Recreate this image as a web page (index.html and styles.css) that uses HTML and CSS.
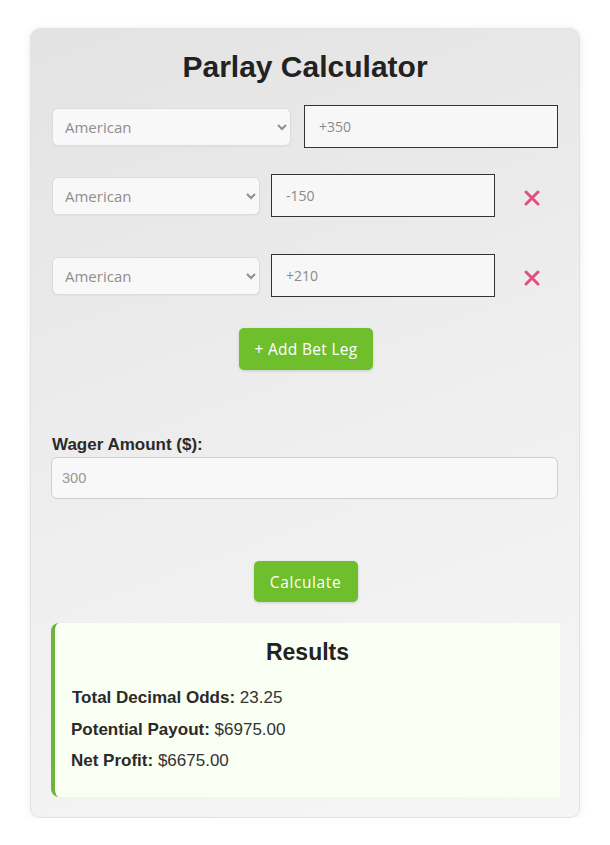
FILE: index.html
```html
<!DOCTYPE html>
<html lang="en">
<head>
<meta charset="utf-8">
<title>Parlay Calculator</title>
<link rel="stylesheet" href="styles.css">
</head>
<body>
<div class="page">
  <div class="card">
    <h1 class="title">Parlay Calculator</h1>

    <div class="leg leg-first">
      <select class="odds-type"><option>American</option></select>
      <input class="odds-input" type="text" placeholder="+350">
    </div>

    <div class="leg leg-second">
      <select class="odds-type"><option>American</option></select>
      <input class="odds-input" type="text" placeholder="-150">
      <button class="remove" type="button" aria-label="Remove">
        <svg width="18" height="18" viewBox="0 0 18 18"><path d="M3 3 L15 15 M15 3 L3 15" stroke="#e0527e" stroke-width="3" stroke-linecap="round" fill="none"/></svg>
      </button>
    </div>

    <div class="leg leg-third">
      <select class="odds-type"><option>American</option></select>
      <input class="odds-input" type="text" placeholder="+210">
      <button class="remove" type="button" aria-label="Remove">
        <svg width="18" height="18" viewBox="0 0 18 18"><path d="M3 3 L15 15 M15 3 L3 15" stroke="#e0527e" stroke-width="3" stroke-linecap="round" fill="none"/></svg>
      </button>
    </div>

    <div class="center">
      <button class="btn btn-add" type="button">+ Add Bet Leg</button>
    </div>

    <label class="wager-label" for="wager">Wager Amount ($):</label>
    <input id="wager" class="wager-input" type="text" placeholder="300">

    <div class="center">
      <button class="btn btn-calc" type="button">Calculate</button>
    </div>

    <div class="results">
      <h2 class="results-title">Results</h2>
      <p class="res-line res-first"><strong>Total Decimal Odds:</strong> 23.25</p>
      <p class="res-line"><strong>Potential Payout:</strong> $6975.00</p>
      <p class="res-line"><strong>Net Profit:</strong> $6675.00</p>
    </div>
  </div>
</div>
</body>
</html>
```

FILE: styles.css
```css
* { box-sizing: border-box; }
html, body { margin: 0; padding: 0; background: #ffffff; }
body { font-family: "Liberation Sans", Arial, sans-serif; color: #222; }

.page { padding: 28px 30px 0 30px; }

.card {
  width: 550px;
  height: 790px;
  border: 1px solid #e2e2e2;
  border-radius: 10px;
  background: linear-gradient(160deg, #e3e3e3 0%, #efefef 55%, #f6f6f6 100%);
  box-shadow: 0 1px 8px rgba(0,0,0,0.08);
  padding: 21px 21px 0 21px;
}

.title {
  margin: 0 0 21px 0;
  text-align: center;
  font-size: 30px;
  line-height: 34px;
  font-weight: bold;
  color: #222;
}

.leg { display: flex; align-items: center; height: 43px; }
.leg-first { margin-bottom: 26px; }
.leg-second { margin-bottom: 37px; }
.leg-third { margin-bottom: 31px; }

.odds-type {
  height: 38px;
  border: 1px solid #dcdcdc;
  border-radius: 6px;
  background: #f8f8f8;
  color: #8e8e8e;
  font-family: "Open Sans", sans-serif;
  font-size: 15px;
  padding: 0 8px 0 8px;
  box-shadow: 0 1px 2px rgba(0,0,0,0.04);
}
.leg-first .odds-type { width: 239px; margin-right: 13px; }
.leg-second .odds-type, .leg-third .odds-type { width: 208px; margin-right: 11px; }

.odds-input {
  height: 43px;
  border: 1px solid #333;
  border-radius: 0;
  background: #f7f7f7;
  font-family: "Open Sans", sans-serif;
  font-size: 14px;
  padding: 0 0 0 14px;
  outline: none;
}
.leg-first .odds-input { width: 254px; }
.leg-second .odds-input, .leg-third .odds-input { width: 224px; }
.odds-input::placeholder { color: #8a8a8a; }

.remove {
  width: 63px;
  height: 43px;
  border: none;
  background: transparent;
  padding: 4px 0 0 10px;
  display: flex;
  align-items: center;
  justify-content: center;
}

.center { display: flex; justify-content: center; }

.btn {
  background: #6fbe2b;
  color: #ffffff;
  border: none;
  border-radius: 5px;
  font-family: "Open Sans", sans-serif;
  font-size: 15.5px;
  letter-spacing: 0.3px;
  box-shadow: 0 1px 3px rgba(0,0,0,0.15);
  padding: 0;
}
.btn-add { width: 134px; height: 42px; margin-left: 2px; }
.btn-calc { width: 104px; height: 41px; margin-left: 1px; letter-spacing: 0.6px; }

.wager-label {
  display: block;
  margin: 66px 0 3px 0;
  font-size: 17px;
  line-height: 18px;
  font-weight: bold;
  color: #2a2a2a;
}

.wager-input {
  display: block;
  width: 507px;
  height: 42px;
  margin-left: -1px;
  border: 1px solid #cfcfcf;
  border-radius: 6px;
  background: #f8f8f8;
  font-family: "Liberation Sans", Arial, sans-serif;
  font-size: 14.5px;
  padding: 0 0 0 10px;
  margin-bottom: 62px;
  outline: none;
}
.wager-input::placeholder { color: #999; }

.results {
  margin: 21px 0 0 -1px;
  width: 509px;
  height: 174px;
  background: #fafff3;
  border-left: 4px solid #6db33f;
  border-radius: 8px 0 0 8px;
  padding: 16px 0 0 16px;
}

.results-title {
  margin: 0 0 24px 0;
  text-align: center;
  font-size: 23px;
  line-height: 26px;
  font-weight: bold;
  color: #222;
  padding-right: 16px;
}

.res-line {
  margin: 0 0 13.5px 0;
  font-size: 17px;
  line-height: 18px;
  color: #333;
}
.res-first { padding-left: 1px; }
.res-line strong { color: #2a2a2a; }
```
